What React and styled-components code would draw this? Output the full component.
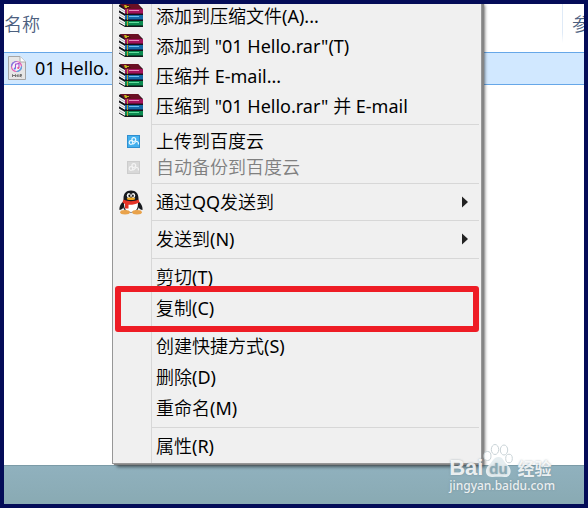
import React from 'react';
import styled, { createGlobalStyle } from 'styled-components';

const GlobalStyle = createGlobalStyle`
  * {
    box-sizing: border-box;
  }
  body {
    margin: 0;
    font-family: 'Noto Sans', 'Noto Sans CJK SC DemiLight', 'Noto Sans CJK SC', sans-serif;
    font-size: 18px;
    color: #000;
  }
`

const Frame = styled.div`
  position: relative;
  display: flex;
  flex-direction: column;
  min-height: 100vh;
  border: 4px solid #040c58;
  overflow: hidden;
`

const Explorer = styled.main`
  flex: 1;
  background: #fff;
`

const FileTable = styled.table`
  width: 100%;
  table-layout: fixed;
  border-collapse: separate;
  border-spacing: 0;
`

const HeadCell = styled.th`
  width: ${props => props.$width || 'auto'};
  height: 48px;
  padding: 0 0 8px ${props => (props.$divided ? '9px' : '0')};
  overflow: hidden;
  border-left: ${props => (props.$divided ? '1px solid' : '0')};
  border-image: linear-gradient(#dfeaf7 60%, #fff 80%) 1;
  color: #4c607f;
  font-weight: 350;
  line-height: 24px;
  text-align: left;
  white-space: nowrap;
`

const FileCell = styled.td`
  height: 33px;
  padding: 0 4px 2px;
  background: #d1e8ff;
  border-top: 1px solid #66a7e8;
  border-bottom: 1px solid #66a7e8;
`

const FileName = styled.span`
  display: flex;
  align-items: center;
  gap: 9px;
  line-height: 24px;
`

const Taskbar = styled.footer`
  height: 39px;
  border-top: 1px solid #7b9ba7;
  background: linear-gradient(#90b1be, #89aab3);
`

const Menu = styled.div`
  position: absolute;
  top: -4px;
  left: 108px;
  width: 370px;
  padding-bottom: 1px;
  border: 1px solid #979797;
  background: linear-gradient(90deg, transparent 38px, #d7d7d7 38px, #d7d7d7 39px, transparent 39px) #f0f0f0;
  box-shadow: 2px 1px 1px #858585, 4px 4px 3px -1px rgba(0, 0, 0, 0.5);
`

const Group = styled.div`
  padding: 3px 0;

  &:first-child {
    padding-top: 0;
  }
  &:last-child {
    padding-bottom: 0;
  }
  & + &::before {
    content: '';
    display: block;
    height: 1px;
    margin: -1px 2px 3px 38px;
    background: #d7d7d7;
  }
  & + & {
    padding-top: 1px;
  }
`

const Item = styled.button`
  position: relative;
  display: grid;
  grid-template-columns: 36px 1fr 19px;
  align-items: center;
  width: 100%;
  height: ${props => props.$height}px;
  padding: 0 0 ${props => props.$height % 2}px;
  border: 0;
  background: none;
  color: inherit;
  font: inherit;
  line-height: 24px;
  text-align: left;

  &:disabled {
    color: #808080;
  }
`

const IconSlot = styled.span`
  display: flex;
  justify-content: center;
`

const Label = styled.span`
  padding-left: 7px;
  white-space: nowrap;
`

const Highlight = styled.span`
  position: absolute;
  inset: -7px 2px -8px 2px;
  border: 6px solid #ee1c25;
  border-radius: 3px;
`

const Watermark = styled.div`
  position: absolute;
  right: 29px;
  bottom: 10px;
  color: rgba(255, 255, 255, 0.85);
  text-shadow: 0 0 2px rgba(110, 130, 140, 0.6);
`

const Brand = styled.div`
  display: flex;
  align-items: flex-end;
  height: 36px;
  font-weight: 700;
  line-height: 20px;
`

const BrandLatin = styled.span`
  font-family: 'Liberation Sans', sans-serif;
  font-size: 22px;
`

const BrandHan = styled.span`
  margin-left: 4px;
  font-family: 'Noto Sans CJK SC', sans-serif;
  font-size: 17px;
`

const Site = styled.div`
  font-family: 'Noto Sans', sans-serif;
  font-size: 12px;
  font-weight: 500;
  line-height: 16px;
`

const RarIcon = () => (
  <svg width="24" height="24" viewBox="0 0 24 24" aria-hidden="true">
    <path d="M0 1l2-1h17l5 5v18H7l-7-5z" fill="#14141a" />
    <path d="M1 0h18l4 5H6z" fill="#6b1024" />
    <path d="M5 1h4l3 3H9z" fill="#3e1512" />
    <path d="M5 1h2l1 1h2v1H8v1H6z" fill="#c3b21d" />
    {[
      ['#a3145d', '#e88bbd', '#6a0d3c'],
      ['#1668a8', '#6fc0ec', '#0b3360'],
      ['#0b8a50', '#62dd9f', '#064a2d'],
    ].map(([base, shine, shade], i) => (
      <g key={base} transform={`translate(0 ${i * 6})`}>
        <path d="M0 2.500l6 3.500v4L0 6.500z" fill="#f4f4f4" />
        <path d="M0 4.500l6 3.500" stroke="#8c8c90" strokeWidth=".6" />
        <path d="M0 7l6 3.500h2" fill="none" stroke="#14141a" />
        <path d="M6 5h18v5H6z" fill={base} />
        <path d="M10 6h10v1H10z" fill={shine} />
        <path d="M6 9h18v1H6z" fill={shade} />
        <path d="M8 5h1v5H8z" fill="#b79a35" />
        <path d="M6 10h18v1H6z" fill="#14141a" />
      </g>
    ))}
  </svg>
)

const CloudIcon = ({ muted }) => (
  <svg width="17" height="13" viewBox="-4 0 17 13" aria-hidden="true">
    <path d="M0 0h13v13H0z" fill={muted ? '#cdcdcd' : '#2f8fd0'} />
    <path d="M1 1h11v11H1z" fill={muted ? '#d8d8d8' : '#43b0ee'} />
    <g fill="none" stroke={muted ? '#f4f4f4' : '#e9f8ff'} strokeWidth="1.200">
      <circle cx="4" cy="7.500" r="1.800" />
      <circle cx="6.800" cy="4.600" r="1.900" />
      <path d="M5.500 8.500c1.500 1.500 2.500-2.500 4.500-2 1.200.3 1.700 1.500 1.300 3" />
    </g>
  </svg>
)

const QQIcon = () => (
  <svg width="24" height="25" viewBox="0 0 24 25" aria-hidden="true">
    <path d="M5 11c-3 2-5 5.500-4.500 9 1.500 0 3-1 4-2.500zM19 11c3 2 5 5.500 4.500 9-1.500 0-3-1-4-2.500z" fill="#17191e" />
    <path d="M12 .5c-5 0-7.500 3-7.500 8v3C3 15 3.500 22 12 22.500 20.500 22 21 15 19.500 11.500v-3c0-5-2.500-8-7.500-8z" fill="#17191e" />
    <path d="M5 13c0 6 2 9 7 9s7-3 7-9z" fill="#fff" />
    <ellipse cx="6" cy="22.300" rx="4.800" ry="2.200" fill="#e9a24a" />
    <ellipse cx="18" cy="22.300" rx="4.800" ry="2.200" fill="#e9a24a" />
    <ellipse cx="9.800" cy="5.400" rx="2" ry="2.500" fill="#fff" />
    <ellipse cx="14.200" cy="5.400" rx="2" ry="2.500" fill="#fff" />
    <ellipse cx="10.300" cy="5.700" rx=".9" ry="1.200" fill="#111" />
    <ellipse cx="13.900" cy="5.700" rx=".9" ry="1.200" fill="#111" />
    <ellipse cx="12" cy="8.800" rx="4.200" ry="1.200" fill="#f0a81e" />
    <path d="M4.500 9.500c4.500 2.300 10.500 2.300 15 0l1 3c-4 2-8 2.400-11 2.200V18.500H6v-4.500L3.500 12.500z" fill="#e63327" />
  </svg>
)

const AudioFileIcon = () => (
  <svg width="18" height="24" viewBox="0 0 18 24" aria-hidden="true">
    <path d="M.5.5H12l5.500 5.500v17.500H.5z" fill="#e6e6e6" stroke="#a5a5a5" />
    <path d="M12 .5V6h5.500" fill="#fff" stroke="#aaa" />
    <circle cx="8.500" cy="10.500" r="5" fill="#f7f4f9" stroke="#e460b0" strokeWidth="1.200" />
    <path d="M3.500 10.500a5 5 0 0 1 5-5" fill="none" stroke="#7b7ce8" strokeWidth="1.200" />
    <path d="M13.500 10.500a5 5 0 0 1-5 5" fill="none" stroke="#45b1e8" strokeWidth="1.200" />
    <path d="M7.500 12.500V8.200l3.500-.8v4.300" fill="none" stroke="#a34fd0" strokeWidth="1.100" />
    <circle cx="6.800" cy="12.600" r="1.100" fill="#5c7ee8" />
    <circle cx="10.300" cy="11.900" r="1.100" fill="#e84f93" />
    <path d="M4.500 21v-2.500l1.500 1.500 1.500-1.500V21M10 21v-2.500L8.500 20H10.500M12 21v-2.500h1.500v1.300H12l1.500 1.200" fill="none" stroke="#666" strokeWidth=".9" />
  </svg>
)

const Arrow = () => (
  <svg width="6" height="12" viewBox="0 0 6 12" aria-hidden="true">
    <path d="M0 0.500l6 5.500-6 5.500z" fill="#222" />
  </svg>
)

const Paw = () => (
  <svg width="30" height="34" viewBox="0 0 30 34" aria-hidden="true">
    <g fill="#fff" fillOpacity="0.85" stroke="#c9d3d7" strokeWidth="1">
      <ellipse cx="4.500" cy="12" rx="3.500" ry="4.500" />
      <ellipse cx="12" cy="5.500" rx="3.700" ry="5" />
      <ellipse cx="21" cy="6" rx="3.700" ry="5" />
      <ellipse cx="26" cy="14.500" rx="3.300" ry="4.300" />
    </g>
    <path d="M15.500 13c-5 0-6 5-9 7.500-6 5-4 13 3 12.500 4-.5 8-.5 12 0 7 .5 8-8 3-12-4-3-4-8-9-8z" fill="#e5edf0" />
    <text x="15.500" y="30" textAnchor="middle" fontFamily="Liberation Sans, sans-serif" fontSize="15" fontWeight="700" fill="#8aa9b4">du</text>
  </svg>
)

const groups = [
  {
    height: 30,
    items: [
      { label: '添加到压缩文件(A)...', icon: <RarIcon /> },
      { label: '添加到 "01 Hello.rar"(T)', icon: <RarIcon /> },
      { label: '压缩并 E-mail...', icon: <RarIcon /> },
      { label: '压缩到 "01 Hello.rar" 并 E-mail', icon: <RarIcon /> },
    ],
  },
  {
    height: 26,
    items: [
      { label: '上传到百度云', icon: <CloudIcon /> },
      { label: '自动备份到百度云', icon: <CloudIcon muted />, disabled: true },
    ],
  },
  { height: 30, items: [{ label: '通过QQ发送到', icon: <QQIcon />, submenu: true }] },
  { height: 31, items: [{ label: '发送到(N)', submenu: true }] },
  { height: 31, items: [{ label: '剪切(T)' }, { label: '复制(C)', highlighted: true }] },
  { height: 31, items: [{ label: '创建快捷方式(S)' }, { label: '删除(D)' }, { label: '重命名(M)' }] },
  { height: 31, items: [{ label: '属性(R)' }] },
]

const App = () => (
  <Frame>
    <GlobalStyle />

    <Explorer>
      <FileTable>
        <thead>
          <tr>
            <HeadCell>名称</HeadCell>
            <HeadCell $width="22px" $divided>参</HeadCell>
          </tr>
        </thead>
        <tbody>
          <tr>
            <FileCell colSpan={2}>
              <FileName><AudioFileIcon />01 Hello.</FileName>
            </FileCell>
          </tr>
        </tbody>
      </FileTable>
    </Explorer>

    <Taskbar />

    <Menu role="menu">
      {groups.map((group, i) => (
        <Group key={i} role="group">
          {group.items.map(item => (
            <Item
              key={item.label}
              type="button"
              role="menuitem"
              aria-haspopup={item.submenu ? 'menu' : undefined}
              disabled={item.disabled}
              $height={group.height}
            >
              <IconSlot>{item.icon}</IconSlot>
              <Label>{item.label}</Label>
              {item.submenu && <Arrow />}
              {item.highlighted && <Highlight />}
            </Item>
          ))}
        </Group>
      ))}
    </Menu>

    <Watermark>
      <Brand>
        <BrandLatin>Bai</BrandLatin>
        <Paw />
        <BrandHan>经验</BrandHan>
      </Brand>
      <Site>jingyan.baidu.com</Site>
    </Watermark>
  </Frame>
)

export default App;
